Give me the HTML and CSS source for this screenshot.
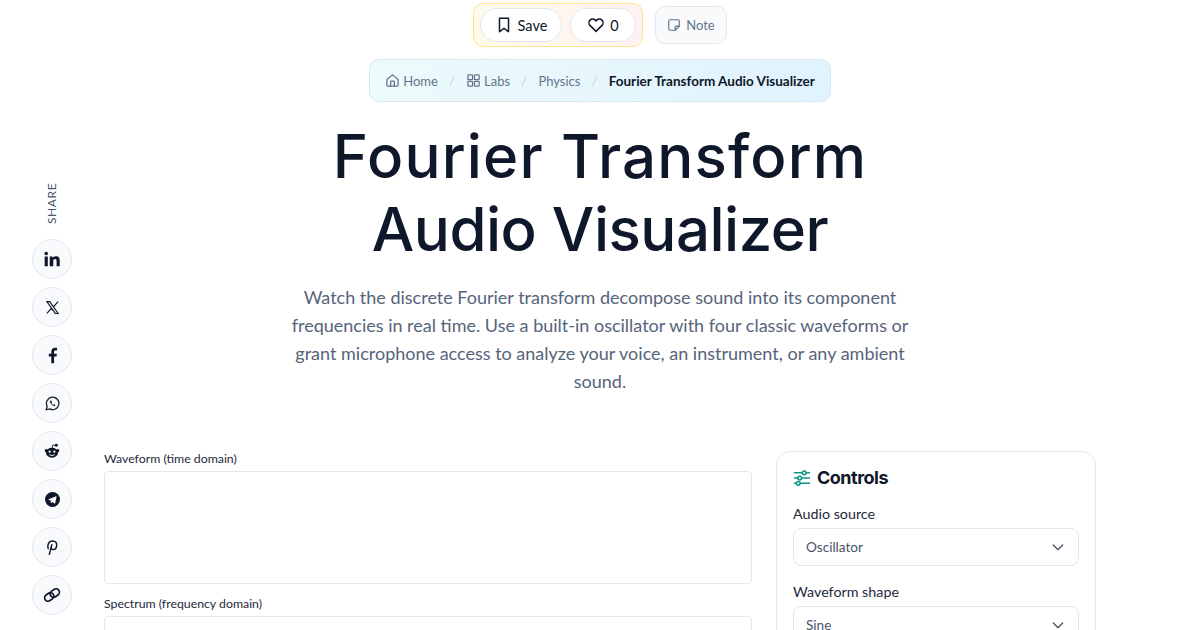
FILE: index.html
```html
<!DOCTYPE html>
<html lang="en">
<head>
    <meta charset="UTF-8">
    <meta name="viewport" content="width=device-width, initial-scale=1.0">
    <title>Fourier Transform Audio Visualizer</title>
    <link rel="stylesheet" href="styles.css">
</head>
<body>
    <aside class="share">
        <span class="share-label">SHARE</span>
        <a class="share-btn" aria-label="LinkedIn"><svg viewBox="0 0 24 24" width="16" height="16" fill="#0f172a"><path d="M1 8.2h4.7V23H1zM3.35 1a2.7 2.7 0 1 1 0 5.4 2.7 2.7 0 0 1 0-5.4zM8.6 8.2h4.5v2h.1c.7-1.2 2.3-2.5 4.6-2.5 4.9 0 5.8 3.1 5.8 7.2V23h-4.7v-7.100c0-1.700 0-3.800-2.300-3.800s-2.700 1.800-2.700 3.700V23H8.600z"/></svg></a>
        <a class="share-btn" aria-label="X"><svg viewBox="0 0 24 24" width="15" height="15" fill="none" stroke="#0f172a" stroke-width="1.8"><path d="M3 2.500h4.500L21 21.500h-4.500zM21 2.500l-7.800 8.700M3 21.500l7.900-8.800"/></svg></a>
        <a class="share-btn" aria-label="Facebook"><svg viewBox="0 0 24 24" width="17" height="17" fill="#0f172a"><path d="M14.200 23v-9.600h3.400l.6-4h-4V6.900c0-1.200.5-2 2.200-2h2V1.300C17.900 1.200 16.700 1 15.600 1c-3.100 0-5.300 1.900-5.300 5.400v3H6.800v4h3.500V23z"/></svg></a>
        <a class="share-btn" aria-label="WhatsApp"><svg viewBox="0 0 24 24" width="15" height="15" fill="none" stroke="#0f172a" stroke-width="2"><path d="M2 22l1.500-5.400A10 10 0 1 1 7.500 20.600z"/><path d="M8.500 7.500c-.8 1 -.6 2.600.8 4.500s3.400 3.800 5.300 4c1.200.1 2-.6 2.100-1.600l-2.300-1.200-1 1c-1.200-.5-2.500-1.800-3.100-3.100l.9-1-1-2.400c-.7-.3-1.300-.4-1.700-.2z" fill="#0f172a" stroke="none"/></svg></a>
        <a class="share-btn" aria-label="Reddit"><svg viewBox="0 0 24 24" width="16" height="16"><ellipse cx="12" cy="14.500" rx="9" ry="7.500" fill="#0f172a"/><circle cx="3.500" cy="11.500" r="2.500" fill="#0f172a"/><circle cx="20.500" cy="11.500" r="2.500" fill="#0f172a"/><circle cx="18.500" cy="3.500" r="2.200" fill="#0f172a"/><path d="M12 8l1.200-5 4 1" fill="none" stroke="#0f172a" stroke-width="1.300"/><circle cx="8.500" cy="13" r="1.700" fill="#fff"/><circle cx="15.500" cy="13" r="1.700" fill="#fff"/><path d="M8 17.500c2.400 1.600 5.600 1.600 8 0" fill="none" stroke="#fff" stroke-width="1.400"/></svg></a>
        <a class="share-btn" aria-label="Telegram"><svg viewBox="0 0 24 24" width="15" height="15"><circle cx="12" cy="12" r="12" fill="#0f172a"/><path d="M5 11.800l12.500-4.900c.6-.2 1.100.1.900.9l-2.100 10c-.2.700-.6.900-1.200.5l-3.200-2.400-1.600 1.500c-.3.300-.5.300-.7-.1l-.6-3.600z" fill="#fff"/></svg></a>
        <a class="share-btn" aria-label="Pinterest"><svg viewBox="0 0 24 24" width="16" height="16" fill="none" stroke="#0f172a" stroke-width="2.200" stroke-linecap="round"><path d="M6.300 14.500C4.300 10 6.800 3 12.800 3c4.500 0 6.700 3.100 6.200 6.800-.5 3.800-3 6.200-5.600 6-1.700-.1-2.700-1.200-3-2.300"/><path d="M11.800 8.500L8 23"/></svg></a>
        <a class="share-btn" aria-label="Copy link"><svg viewBox="0 0 24 24" width="18" height="18" fill="none" stroke="#0f172a" stroke-width="2.300" stroke-linecap="round"><g transform="rotate(-35 12 12)"><rect x="1" y="7.500" width="13" height="9" rx="4.500"/><rect x="10" y="7.500" width="13" height="9" rx="4.500"/></g></svg></a>
    </aside>

    <main class="page">
        <div class="actions">
            <div class="save-group">
                <button class="pill pill-save"><svg viewBox="0 0 24 24" width="18" height="18" class="icon"><path d="M6 3h12v18l-6-4.500L6 21z"/></svg>Save</button>
                <button class="pill pill-like"><svg viewBox="0 0 24 24" width="18" height="18" class="icon"><path d="M12 20.500l-8-8a5 5 0 0 1 0-7 5 5 0 0 1 7 0l1 1 1-1a5 5 0 0 1 7 0 5 5 0 0 1 0 7z"/></svg>0</button>
            </div>
            <button class="note"><svg viewBox="0 0 24 24" width="14" height="14" class="icon"><path d="M5 3h14a2 2 0 0 1 2 2v9l-7 7H5a2 2 0 0 1-2-2V5a2 2 0 0 1 2-2z"/><path d="M14 21v-5a2 2 0 0 1 2-2h5"/></svg>Note</button>
        </div>

        <nav class="crumbs">
            <a><svg viewBox="0 0 24 24" width="15" height="15" class="icon"><path d="M3 10.500L12 3l9 7.500V19a2 2 0 0 1-2 2H5a2 2 0 0 1-2-2z"/><path d="M9 21v-7a1 1 0 0 1 1-1h4a1 1 0 0 1 1 1v7"/></svg>Home</a>
            <span class="sep">/</span>
            <a><svg viewBox="0 0 24 24" width="15" height="15" class="icon"><rect x="3" y="3" width="7.500" height="7.500" rx="1"/><rect x="13.500" y="3" width="7.500" height="7.500" rx="1"/><rect x="3" y="13.500" width="7.500" height="7.500" rx="1"/><rect x="13.500" y="13.500" width="7.500" height="7.500" rx="1"/></svg>Labs</a>
            <span class="sep">/</span>
            <a>Physics</a>
            <span class="sep">/</span>
            <strong>Fourier Transform Audio Visualizer</strong>
        </nav>

        <h1><span class="title-wide">Fourier Transform</span><br>Audio Visualizer</h1>
        <p class="lead">Watch the discrete Fourier transform decompose sound into its component frequencies in real time. Use a built-in oscillator with four classic waveforms or grant microphone access to analyze your voice, an instrument, or any ambient sound.</p>

        <div class="lab">
            <section class="scopes">
                <label>Waveform (time domain)</label>
                <div class="scope"></div>
                <label>Spectrum (frequency domain)</label>
                <div class="scope"></div>
            </section>
            <section class="controls">
                <h2><svg viewBox="0 0 24 24" width="18" height="18" class="icon teal"><path d="M2 5h20M2 12h20M2 19h20"/><circle cx="15" cy="5" r="2.500" fill="#fff"/><circle cx="9" cy="12" r="2.500" fill="#fff"/><circle cx="7" cy="19" r="2.500" fill="#fff"/></svg>Controls</h2>
                <label>Audio source</label>
                <div class="select">Oscillator<svg viewBox="0 0 24 24" width="16" height="16" class="icon"><path d="M5 9l7 7 7-7"/></svg></div>
                <label>Waveform shape</label>
                <div class="select">Sine<svg viewBox="0 0 24 24" width="16" height="16" class="icon"><path d="M5 9l7 7 7-7"/></svg></div>
            </section>
        </div>
    </main>
</body>
</html>
```

FILE: styles.css
```css
html, body {
    margin: 0;
    height: 630px;
    overflow: hidden;
    background-color: #fff;
}
body {
    font-family: "Lato", "Liberation Sans", sans-serif;
    color: #0f172a;
    position: relative;
}
.icon {
    fill: none;
    stroke: currentColor;
    stroke-width: 2;
    stroke-linecap: round;
    stroke-linejoin: round;
    flex-shrink: 0;
}
.share {
    position: absolute;
    left: 32px;
    top: 183px;
    width: 40px;
    display: flex;
    flex-direction: column;
    align-items: center;
    gap: 8px;
}
.share-label {
    writing-mode: vertical-rl;
    transform: rotate(180deg);
    height: 41px;
    font-size: 12px;
    letter-spacing: 0.6px;
    line-height: 14px;
    color: #475569;
    margin-bottom: 7px;
}
.share-btn {
    width: 38px;
    height: 38px;
    border: 1px solid #e2e8f0;
    border-radius: 50%;
    background-color: #f8fafc;
    display: flex;
    align-items: center;
    justify-content: center;
}
.page {
    width: 992px;
    margin: 0 auto;
    display: flex;
    flex-direction: column;
    align-items: center;
}
.actions {
    display: flex;
    align-items: center;
    gap: 12px;
    margin-top: 3px;
}
.save-group {
    display: flex;
    gap: 8px;
    padding: 4px 6px;
    border: 1px solid #fde68a;
    border-radius: 10px;
    background: linear-gradient(90deg, #fffbeb, #fef2f2);
}
.pill {
    height: 34px;
    border: 1px solid #e2e8f0;
    border-radius: 17px;
    background-color: #fff;
    display: flex;
    align-items: center;
    justify-content: center;
    gap: 5px;
    font: 400 14.5px "Lato", sans-serif;
    color: #0f172a;
    padding: 0;
}
.pill-save {
    width: 82px;
}
.pill-like {
    width: 66px;
}
.note {
    height: 38px;
    width: 72px;
    padding: 0;
    border: 1px solid #e2e8f0;
    border-radius: 10px;
    background-color: #f8fafc;
    display: flex;
    align-items: center;
    justify-content: center;
    gap: 5px;
    font: 400 13px "Lato", sans-serif;
    color: #64748b;
}
.crumbs {
    margin-top: 12px;
    height: 41px;
    padding: 0 15px;
    border: 1px solid #dbe6ee;
    border-radius: 10px;
    background: linear-gradient(100deg, #ecfbfb, #e0f2fe);
    display: flex;
    align-items: center;
    font-size: 13px;
    color: #64748b;
}
.crumbs a {
    display: flex;
    align-items: center;
    gap: 3px;
}
.crumbs .sep {
    margin: 0 11.2px;
    color: #cbd5e1;
}
.crumbs strong {
    font-size: 13.5px;
    font-weight: 700;
    color: #0f172a;
}
h1 {
    margin: 18px 0 0;
    font-family: "Inter", "Liberation Sans", sans-serif;
    font-size: 60px;
    line-height: 73px;
    font-weight: 500;
    text-align: center;
    letter-spacing: -0.5px;
}
.title-wide {
    letter-spacing: 1.15px;
}
.lead {
    width: 640px;
    margin: 17px 0 0;
    font-size: 18px;
    line-height: 28px;
    font-weight: 400;
    text-align: center;
    color: #56647a;
}
.lab {
    width: 100%;
    margin-top: 56px;
    display: grid;
    grid-template-columns: 648px 320px;
    gap: 24px;
    align-items: start;
}
.scopes label {
    display: block;
    font-size: 12.3px;
    line-height: 16px;
    margin-bottom: 4px;
    color: #1e293b;
}
.scope {
    height: 111px;
    border: 1px solid #e2e8f0;
    border-radius: 4px;
    margin-bottom: 12px;
}
.controls {
    border: 1px solid #e2e8f0;
    border-radius: 14px;
    padding: 16px;
}
.controls h2 {
    margin: 0 0 17px;
    display: flex;
    align-items: center;
    gap: 6px;
    font-family: "Inter", "Liberation Sans", sans-serif;
    font-size: 18px;
    line-height: 20px;
    font-weight: 700;
    letter-spacing: -0.5px;
}
.teal {
    color: #0d9488;
}
.controls label {
    display: block;
    font-size: 14.3px;
    line-height: 18px;
    margin-bottom: 5px;
    color: #1e293b;
}
.select {
    height: 36px;
    padding: 0 12px;
    margin-bottom: 17px;
    border: 1px solid #e2e8f0;
    border-radius: 8px;
    display: flex;
    align-items: center;
    justify-content: space-between;
    font-size: 13.6px;
    color: #475569;
}
```
